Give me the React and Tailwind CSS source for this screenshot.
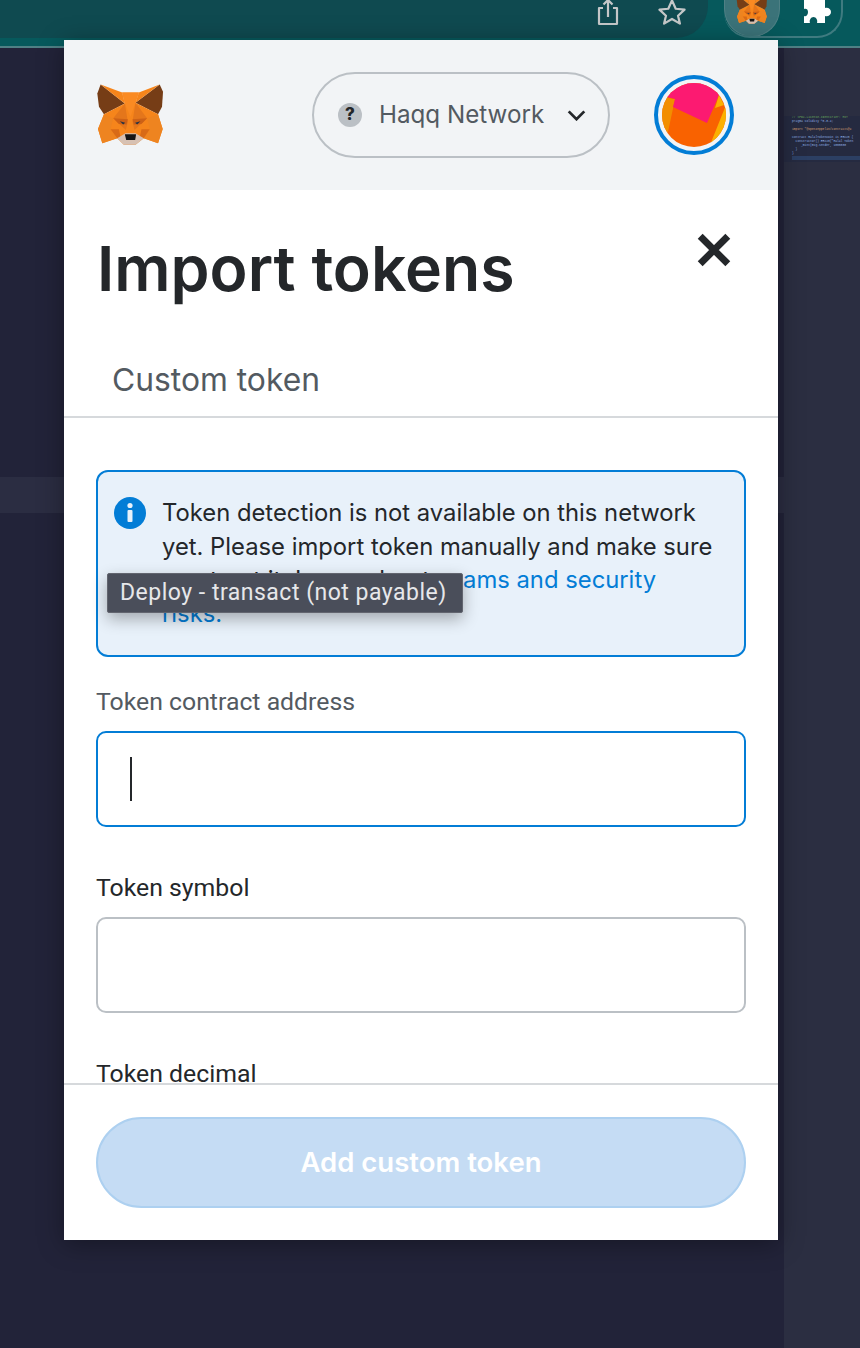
const FoxLogo = ({ className }) => (
    <svg viewBox="90 90 220 210" className={className}>
        <polygon points="110,103 183,160 120,193 105,170 100,130" fill="#763d16" />
        <polygon points="288,103 215,158 283,193 295,170 298,125" fill="#763d16" />
        <polygon points="120,193 183,160 175,127 225,127 215,158 283,193 297,237 283,280 240,265 215,285 180,285 160,265 115,280 102,237" fill="#f6851b" />
        <polygon points="110,103 175,127 183,160" fill="#f6851b" />
        <polygon points="288,103 225,127 215,158" fill="#f6851b" />
        <polygon points="120,193 148,205 140,238 160,265 115,280 102,237" fill="#ee8420" />
        <polygon points="283,193 250,205 258,238 240,265 283,280 297,237" fill="#ee8420" />
        <polygon points="183,160 175,127 225,127 215,158 200,200" fill="#fa8a22" />
        <polygon points="148,205 183,160 192,215 186,240" fill="#e4761b" />
        <polygon points="250,205 215,158 206,215 212,240" fill="#e4761b" />
        <polygon points="148,205 192,208 188,224 165,222" fill="#cd6116" />
        <polygon points="250,205 206,208 210,224 233,222" fill="#cd6116" />
        <polygon points="140,238 165,238 170,262 160,265" fill="#d86a17" />
        <polygon points="258,238 233,238 228,262 240,265" fill="#d86a17" />
        <polygon points="168,214 184,218 178,224" fill="#233447" />
        <polygon points="230,214 214,218 220,224" fill="#233447" />
        <polygon points="160,265 185,250 215,250 240,265 215,285 180,285" fill="#d7c1b3" />
        <polygon points="183,253 217,253 214,270 187,270" fill="#161616" />
    </svg>
);

const Blockie = () => (
    <svg viewBox="0 0 64 64" className="w-16 h-16">
        <defs>
            <clipPath id="blockie-clip">
                <circle cx="32" cy="32" r="32" />
            </clipPath>
        </defs>
        <g clipPath="url(#blockie-clip)">
            <rect width="64" height="64" fill="#f96200" />
            <polygon points="0,14 13,16 6,49 0,49" fill="#f28e00" />
            <polygon points="64,22 48,62 64,64" fill="#fbb000" />
            <polygon points="5,14 13,16 11,24 45,40 57,12 50,0 5,0" fill="#fc1a71" />
            <polygon points="57,12 62,22 53,25" fill="#fbb000" />
        </g>
    </svg>
);

const Field = ({ label, active, labelClass }) => (
    <div className="flex flex-col">
        <label className={`pt-[1px] text-[24.8px] leading-[30px] font-['Roboto',sans-serif] ${labelClass}`}>{label}</label>
        <div className={`mt-[14px] h-[96px] rounded-[10px] border-2 flex items-center pl-[32px] ${active ? 'border-[#037dd6]' : 'border-[#bbc0c5]'}`}>
            {active && <div className="w-[2px] h-[44px] bg-[#24272a]" />}
        </div>
    </div>
);

export default function App() {
    return (
        <div className="relative w-[860px] h-[1348px] overflow-hidden bg-[#222339] font-['Inter',sans-serif]">
            {/* browser toolbar */}
            <div className="h-[48px] bg-[#06595c] border-b-2 border-[#4f8085] flex items-start">
                <div className="w-[708px] h-[38px] bg-[#0f4a50] rounded-br-[32px] flex items-start pl-[597px] overflow-hidden">
                    <svg viewBox="0 0 22 25" className="w-[22px] h-[25px] shrink-0 text-[#c4c7c8]" fill="none" stroke="currentColor" strokeWidth="2.2">
                        <path d="M6 8H2v15.500a.5.5 0 0 0 .5.5h17a.5.5 0 0 0 .5-.5V8h-4" strokeLinejoin="round" />
                        <path d="M11 17V0M6.500 4.500 11 0l4.500 4.500" />
                    </svg>
                    <svg viewBox="0 0 30 28" className="ml-[38px] w-[30px] h-[26px] -mt-[1px] shrink-0 text-[#c4c7c8]" fill="none" stroke="currentColor" strokeWidth="2.4">
                        <path d="M15 1.500 19 10.500l9.500 1-7 6.500 2 8.500-8.500-5-8.500 5 2-8.500-7-6.500 9.500-1z" strokeLinejoin="round" />
                    </svg>
                </div>
                <div className="ml-[16px] w-[119px] h-[38px] rounded-b-[26px] border-b-2 border-r-2 border-[#3f7b80] flex items-start overflow-hidden">
                    <div className="w-[56px] h-[37px] shrink-0 rounded-b-[28px] bg-[#3b7379] border border-t-0 border-[#4f8085] flex justify-center overflow-hidden">
                        <FoxLogo className="w-[34px] h-[32px] shrink-0 -mt-[6px]" />
                    </div>
                    <svg viewBox="0 0 60 40" className="ml-[10px] w-[60px] h-[40px] shrink-0" fill="#ffffff">
                        <path d="M14 0H35V8C38 7 41 9 41 12C41 15 38 17 35 16V23H27C28 20 26 17 23.500 17C21 17 19 20 20 23H14V16C16 17 18 15 18 12C18 9 16 8 14 9Z" />
                    </svg>
                </div>
            </div>

            {/* editor behind the popup */}
            <div className="flex h-[1300px]">
                <div className="flex-1 flex flex-col pt-[429px]">
                    <div className="h-[36px] bg-[#2b2d42]" />
                </div>
                <div className="w-[76px] bg-[#2b2e41] pt-[68px]">
                    <div className="pl-[8px] text-[3px] leading-[4px] whitespace-pre overflow-hidden h-[46px] font-['Liberation_Mono',monospace] text-[#8fb0e0] bg-[#252a40]">
                        <div className="text-[#6fae5f]">{'// SPDX-License-Identifier: MIT'}</div>
                        <div>{'pragma solidity ^0.8.4;'}</div>
                        <div>&nbsp;</div>
                        <div className="text-[#d8a070]">{'import "@openzeppelin/contracts@4'}</div>
                        <div>&nbsp;</div>
                        <div>{'contract HalalTokenCoin is ERC20 {'}</div>
                        <div>{'  constructor() ERC20("Halal Token'}</div>
                        <div>{'     _mint(msg.sender, 1000000'}</div>
                        <div>{'  }'}</div>
                        <div>{'}'}</div>
                        <div className="h-[4px] bg-[#2c3f63]" />
                    </div>
                </div>
            </div>

            {/* metamask popup */}
            <div className="absolute left-[64px] top-[40px] w-[714px] h-[1200px] bg-white flex flex-col shadow-[0_4px_24px_rgba(0,0,0,0.35)] text-[#24272a]">
                <div className="h-[150px] shrink-0 bg-[#f2f4f6] flex items-center pl-[30px] pr-[44px]">
                    <FoxLogo className="w-[73px] h-[70px]" />
                    <div className="ml-[145px] w-[298px] h-[86px] rounded-[43px] border-2 border-[#bbc0c5] flex items-center pl-[24px] pr-[22px]">
                        <div className="w-[24px] h-[24px] rounded-full bg-[#bbc0c5] text-[#24272a] text-[17px] font-extrabold flex items-center justify-center">?</div>
                        <span className="ml-[17px] text-[24.2px] text-[#535a61]">Haqq Network</span>
                        <svg viewBox="0 0 20 12" className="ml-auto w-[19px] h-[11px]" fill="none" stroke="#24272a" strokeWidth="3">
                            <path d="M1.500 1.500 10 10l8.500-8.500" />
                        </svg>
                    </div>
                    <div className="ml-auto w-[80px] h-[80px] rounded-full border-4 border-[#037dd6] flex items-center justify-center shrink-0">
                        <Blockie />
                    </div>
                </div>

                <div className="flex items-start justify-between pl-[33px] pr-[47px] pt-[40px]">
                    <h1 className="text-[62.5px] leading-[76px] font-semibold">Import tokens</h1>
                    <svg viewBox="0 0 32 32" className="mt-[3px] w-[34px] h-[34px]" fill="none" stroke="#24272a" strokeWidth="6.500">
                        <path d="M3 3l26 26M29 3 3 29" />
                    </svg>
                </div>

                <div className="mt-[54px] h-[58px] shrink-0 border-b-2 border-[#d6d9dc] pl-[48px] text-[31.800px] leading-[40px] text-[#535a61]">Custom token</div>

                <div className="flex-1 overflow-hidden px-[32px] pt-[52px] flex flex-col">
                    <div className="relative shrink-0 h-[187px] rounded-[12px] border-2 border-[#037dd6] bg-[#e8f1fa] flex pl-[16px] pt-[24px]">
                        <svg viewBox="0 0 32 32" className="mt-[1px] w-[32px] h-[32px] shrink-0">
                            <circle cx="16" cy="16" r="16" fill="#037dd6" />
                            <circle cx="16" cy="8.500" r="2.600" fill="#e8f1fa" />
                            <rect x="13.500" y="13" width="5" height="12" rx="1" fill="#e8f1fa" />
                        </svg>
                        <p className="ml-[16px] w-[556px] shrink-0 text-[23.800px] leading-[33.500px]">
                            Token detection is not available on this network yet. Please import token manually and make sure you trust it. Learn about <span className="text-[#037dd6]">scams and security risks.</span>
                        </p>
                        <div className="absolute left-[9px] top-[101px] h-[40px] w-[356px] bg-[#4a4e5a] border border-[#62656f] rounded-[2px] shadow-[0_6px_16px_rgba(0,0,0,0.3)] flex items-center pl-[12px] text-[23px] tracking-[0.5px] text-[#e6e7ea] font-['Roboto',sans-serif] whitespace-nowrap">
                            Deploy - transact (not payable)
                        </div>
                    </div>

                    <div className="mt-[29px] flex flex-col gap-[45px] shrink-0">
                        <Field label="Token contract address" active labelClass="text-[#535a61]" />
                        <Field label="Token symbol" labelClass="text-[#24272a]" />
                        <Field label="Token decimal" labelClass="text-[#24272a]" />
                    </div>
                </div>

                <div className="h-[157px] shrink-0 border-t-2 border-[#d6d9dc] bg-white px-[32px] pt-[32px]">
                    <button className="w-full h-[91px] rounded-[46px] bg-[#c5dcf4] border-2 border-[#add0f0] text-white text-[27.5px] font-semibold leading-[83px]">Add custom token</button>
                </div>
            </div>
        </div>
    );
}
